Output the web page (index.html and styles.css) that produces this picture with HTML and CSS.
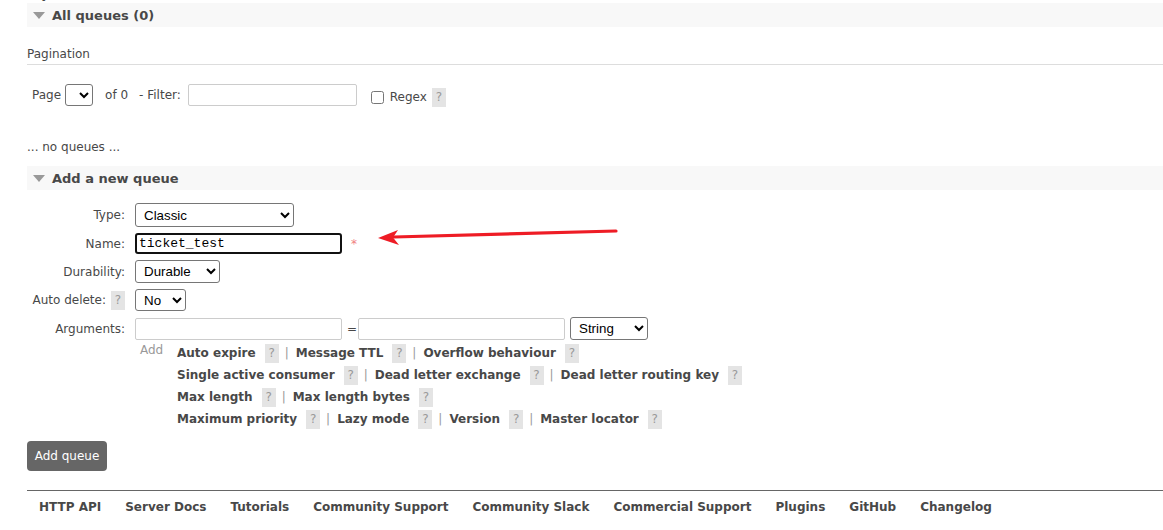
FILE: index.html
```html
<!DOCTYPE html>
<html>
<head>
<meta charset="utf-8">
<link rel="stylesheet" href="styles.css">
</head>
<body>
<div class="page">
  <div class="cut"><h1 class="title">Queues</h1></div>

  <div class="section">
    <h2 class="sec-head"><span class="tri"></span>All queues (0)</h2>
    <div class="sec-body">
      <h3 class="pag-title">Pagination</h3>
      <div class="pag-row">
        <span>Page</span>
        <select class="pg-select"></select>
        <span class="of">of 0</span>
        <span>- Filter:</span>
        <input class="filter" type="text">
        <label class="regex"><input type="checkbox" class="chk"> Regex</label>
        <span class="help">?</span>
      </div>
      <p class="noq">... no queues ...</p>
    </div>
  </div>

  <div class="section">
    <h2 class="sec-head"><span class="tri"></span>Add a new queue</h2>
    <form class="add-form">
      <div class="frow">
        <div class="lbl">Type:</div>
        <select class="sel-type"><option>Classic</option></select>
      </div>
      <div class="frow">
        <div class="lbl">Name:</div>
        <input class="name-in" type="text" value="ticket_test">
        <span class="req">*</span>
      </div>
      <div class="frow">
        <div class="lbl">Durability:</div>
        <select class="sel-dur"><option>Durable</option></select>
      </div>
      <div class="frow">
        <div class="lbl">Auto delete: <span class="help">?</span></div>
        <select class="sel-no"><option>No</option></select>
      </div>
      <div class="frow">
        <div class="lbl">Arguments:</div>
        <input class="arg-in" type="text">
        <span class="eq">=</span>
        <input class="arg-in" type="text">
        <select class="sel-str"><option>String</option></select>
      </div>
      <div class="args-help">
        <span class="add">Add</span>
        <div class="arg-lines">
          <div class="aline"><b>Auto expire</b><span class="help">?</span><i>|</i><b>Message TTL</b><span class="help">?</span><i>|</i><b>Overflow behaviour</b><span class="help">?</span></div>
          <div class="aline"><b>Single active consumer</b><span class="help">?</span><i>|</i><b>Dead letter exchange</b><span class="help">?</span><i>|</i><b>Dead letter routing key</b><span class="help">?</span></div>
          <div class="aline"><b>Max length</b><span class="help">?</span><i>|</i><b>Max length bytes</b><span class="help">?</span></div>
          <div class="aline"><b>Maximum priority</b><span class="help">?</span><i>|</i><b>Lazy mode</b><span class="help">?</span><i>|</i><b>Version</b><span class="help">?</span><i>|</i><b>Master locator</b><span class="help">?</span></div>
        </div>
      </div>
      <button type="button" class="btn">Add queue</button>
    </form>
  </div>

  <div class="footer">
    <a>HTTP API</a><a>Server Docs</a><a>Tutorials</a><a>Community Support</a><a>Community Slack</a><a>Commercial Support</a><a>Plugins</a><a>GitHub</a><a>Changelog</a>
  </div>

  <svg class="arrow" width="260" height="24" viewBox="0 0 260 24">
    <path d="M240 5 L18 11" stroke="#ee1c25" stroke-width="3.2" stroke-linecap="round" fill="none"/>
    <path d="M2 12 L22 4 L17 11.5 L23 19 Z" fill="#ee1c25"/>
  </svg>
</div>
</body>
</html>
```

FILE: styles.css
```css
* { box-sizing: border-box; }
html, body { margin: 0; padding: 0; background: #fff; }
body {
  font-family: "DejaVu Sans", Verdana, sans-serif;
  font-size: 12px;
  color: #484848;
}
.page { position: relative; padding-left: 27px; height: 530px; overflow: hidden; }
.cut { height: 3px; overflow: hidden; }
.title { margin: -14px 0 0 8px; font-size: 14px; font-weight: bold; color: #484848; line-height: 16px; }

.sec-head {
  margin: 0;
  height: 24px;
  background: #f8f8f8;
  font-size: 13px;
  font-weight: bold;
  line-height: 24px;
  color: #484848;
  display: flex;
  align-items: center;
  padding-left: 6px;
  padding-top: 1px;
}
.tri {
  width: 0; height: 0;
  border-left: 6px solid transparent;
  border-right: 6px solid transparent;
  border-top: 7px solid #999;
  margin-right: 7px;
}
.sec-body { padding: 0; }
.pag-title {
  margin: 18px 0 0 0;
  font-size: 12px;
  font-weight: normal;
  line-height: 17px;
  padding-top: 1px;
  padding-bottom: 1px;
  border-bottom: 1px solid #ddd;
}
.pag-row {
  display: flex;
  align-items: center;
  height: 22px;
  margin-top: 19px;
  padding-left: 5px;
}
.pg-select {
  width: 28px; height: 22px;
  margin-left: 4px;
  border: 1px solid #767676;
  border-radius: 3px;
  background: #fff;
}
.of { margin-left: 12px; margin-right: 11px; }
.filter {
  margin-left: 7px;
  width: 169px; height: 22px;
  border: 1px solid #ccc;
  border-radius: 2px;
  padding: 0;
}
.regex { display: flex; align-items: center; margin-left: 14px; margin-top: 4px; }
.chk { margin: 0 6px 0 0; width: 13px; height: 13px; }
.pag-row .help { margin-left: 5px; margin-top: 4px; }
.noq { margin: 33px 0 11px 0; line-height: 16px; }

.help {
  display: inline-block;
  background: #e4e4e4;
  color: #999;
  font-weight: normal;
  font-size: 12px;
  line-height: 19px;
  height: 19px;
  width: 14px;
  text-align: center;
}

.add-form { padding-top: 13px; }
.frow {
  display: flex;
  align-items: center;
  margin-bottom: 6px;
}
.lbl {
  width: 108px;
  padding-right: 10px;
  text-align: right;
  display: flex;
  justify-content: flex-end;
  align-items: center;
  gap: 5px;
  white-space: nowrap;
}
select {
  font-family: "Liberation Sans", Arial, sans-serif;
  font-size: 13.33px;
  color: #000;
  border: 1px solid #767676;
  border-radius: 3px;
  background: #fff;
  padding: 0 2px 0 4px;
}
.sel-type { width: 159px; height: 24px; }
.name-in {
  width: 207px; height: 21px;
  border: 2px solid #111;
  border-radius: 3px;
  font-family: "Liberation Mono", "Courier New", monospace;
  font-size: 13px;
  color: #000;
  padding: 0 2px;
  outline: none;
}
.req { color: #f08080; margin-left: 9px; font-size: 12px; }
.sel-dur { width: 85px; height: 23px; }
.sel-no { width: 51px; height: 22px; }
.arg-in {
  width: 207px; height: 22px;
  border: 1px solid #ccc;
  border-radius: 2px;
  padding: 0;
}
.eq { margin: 0 4px 0 5px; width: 7px; }
.sel-str { width: 78px; height: 23px; margin-left: 5px; }

.args-help { display: flex; margin-left: 108px; margin-top: -4px; }
.add { color: #999; margin-left: 5px; width: 37px; line-height: 16px; }
.arg-lines { display: flex; flex-direction: column; }
.aline { display: flex; align-items: center; height: 22px; }
.aline b { color: #484848; font-weight: bold; font-size: 12px; }
.aline .help { margin-left: 9px; }
.aline i { font-style: normal; color: #999; margin: 0 7px 0 6px; }

.btn {
  margin-top: 11px;
  width: 80px; height: 30px;
  background: #666;
  color: #fff;
  border: none;
  border-radius: 4px;
  font-family: "DejaVu Sans", Verdana, sans-serif;
  font-size: 12px;
  padding: 0;
}
.footer {
  margin-top: 19px;
  border-top: 1px solid #666;
  display: flex;
  height: 31px;
  align-items: center;
  padding-top: 1px;
}
.footer a {
  font-weight: bold;
  color: #484848;
  font-size: 12px;
  padding: 0 12px;
}
.arrow { position: absolute; left: 376px; top: 226px; }
```
